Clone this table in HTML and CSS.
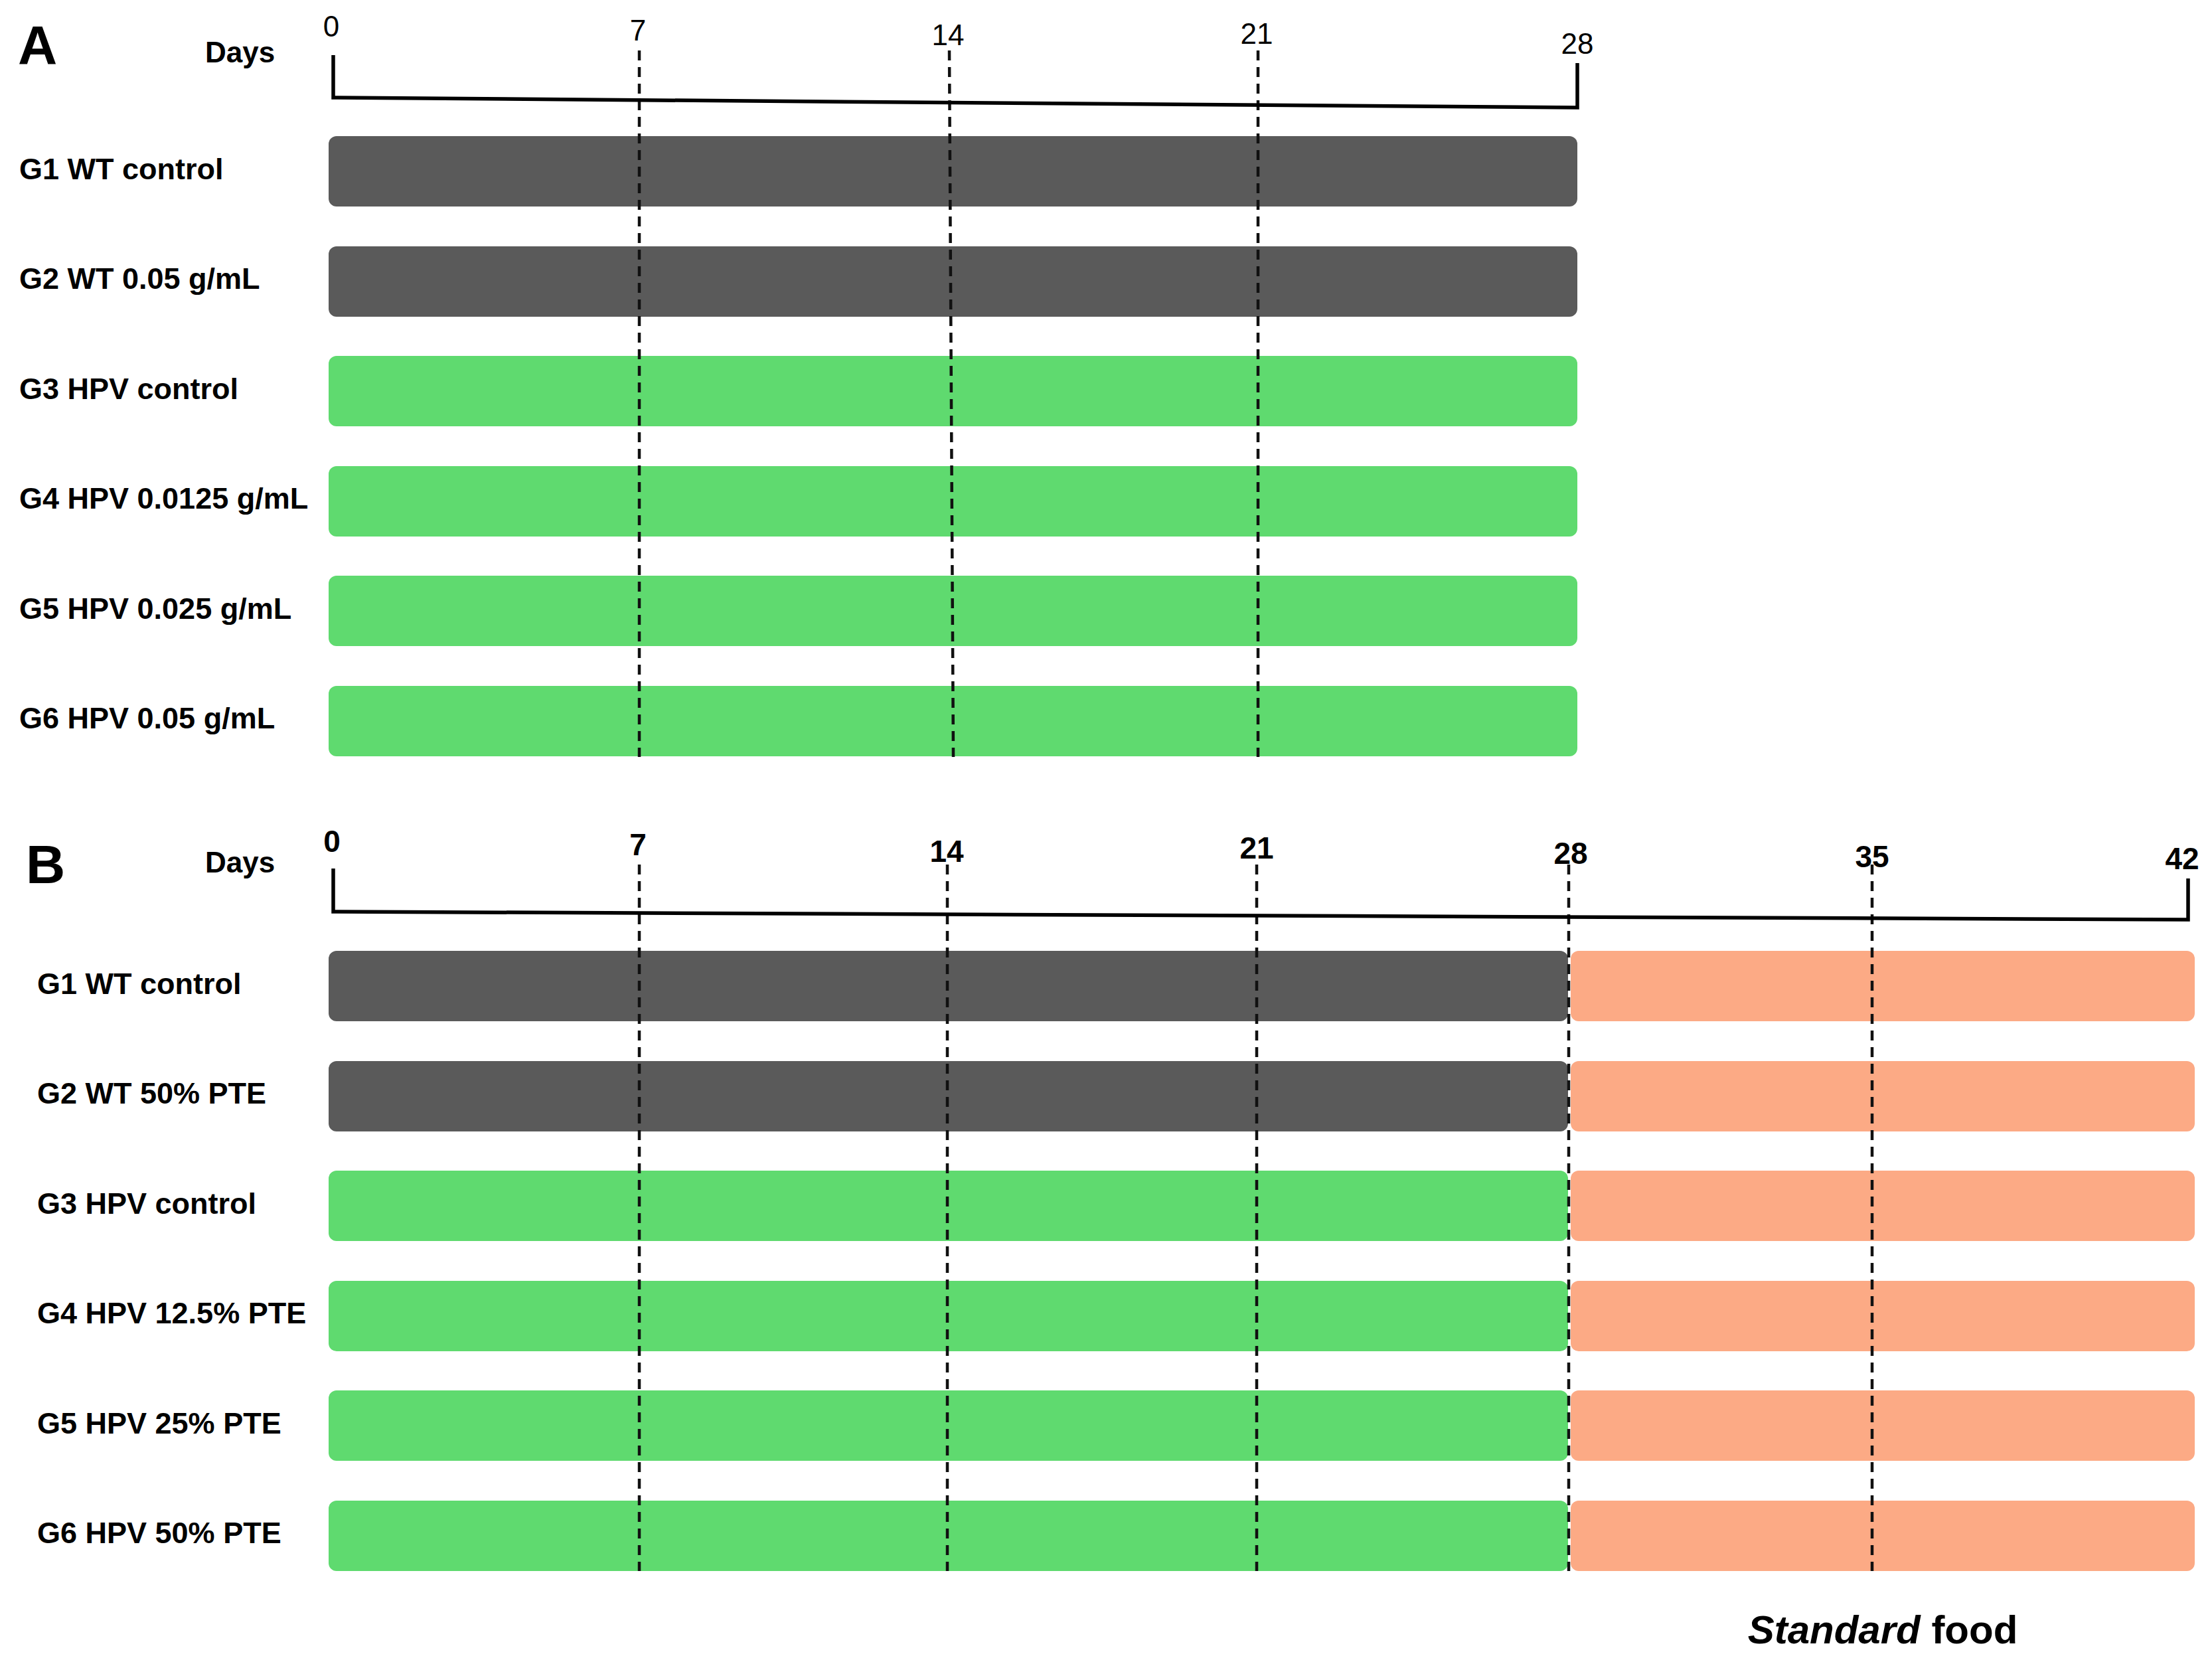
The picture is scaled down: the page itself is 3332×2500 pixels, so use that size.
FILE: index.html
```html
<!DOCTYPE html>
<html lang="en">
<head>
<meta charset="utf-8">
<title>Treatment timeline</title>
<link rel="stylesheet" href="styles.css">
</head>
<body>
<div class="figure">
  <section class="panel panel-a">
    <div class="head"><span class="letter">A</span><span class="days">Days</span></div>
    <div class="rows">
      <div class="row"><span class="label">G1 WT control</span><div class="track"><div class="bar wt full"></div></div></div>
      <div class="row"><span class="label">G2 WT 0.05 g/mL</span><div class="track"><div class="bar wt full"></div></div></div>
      <div class="row"><span class="label">G3 HPV control</span><div class="track"><div class="bar hpv full"></div></div></div>
      <div class="row"><span class="label">G4 HPV 0.0125 g/mL</span><div class="track"><div class="bar hpv full"></div></div></div>
      <div class="row"><span class="label">G5 HPV 0.025 g/mL</span><div class="track"><div class="bar hpv full"></div></div></div>
      <div class="row"><span class="label">G6 HPV 0.05 g/mL</span><div class="track"><div class="bar hpv full"></div></div></div>
    </div>
    <svg class="overlay" width="3332" height="1139" viewBox="0 0 3332 1139">
      <line class="guide" x1="963" y1="76" x2="963" y2="1140"/>
      <line class="guide" x1="1430" y1="76" x2="1436" y2="1140"/>
      <line class="guide" x1="1895" y1="76" x2="1895" y2="1140"/>
      <path class="axis" d="M502,83 L502,147 L2376,162 L2376,95"/>
      <text class="tick tick-a" x="499" y="55">0</text>
      <text class="tick tick-a" x="961" y="61">7</text>
      <text class="tick tick-a" x="1428" y="68">14</text>
      <text class="tick tick-a" x="1893" y="66">21</text>
      <text class="tick tick-a" x="2376" y="81">28</text>
    </svg>
  </section>

  <section class="panel panel-b">
    <div class="head"><span class="letter">B</span><span class="days">Days</span></div>
    <div class="rows">
      <div class="row"><span class="label">G1 WT control</span><div class="track"><div class="bar wt pre"></div><div class="bar std post"></div></div></div>
      <div class="row"><span class="label">G2 WT 50% PTE</span><div class="track"><div class="bar wt pre"></div><div class="bar std post"></div></div></div>
      <div class="row"><span class="label">G3 HPV control</span><div class="track"><div class="bar hpv pre"></div><div class="bar std post"></div></div></div>
      <div class="row"><span class="label">G4 HPV 12.5% PTE</span><div class="track"><div class="bar hpv pre"></div><div class="bar std post"></div></div></div>
      <div class="row"><span class="label">G5 HPV 25% PTE</span><div class="track"><div class="bar hpv pre"></div><div class="bar std post"></div></div></div>
      <div class="row"><span class="label">G6 HPV 50% PTE</span><div class="track"><div class="bar hpv pre"></div><div class="bar std post"></div></div></div>
    </div>
    <svg class="overlay" width="3332" height="1126" viewBox="0 0 3332 1126">
      <line class="guide" x1="963" y1="62" x2="963" y2="1126"/>
      <line class="guide" x1="1427" y1="62" x2="1427" y2="1126"/>
      <line class="guide" x1="1893" y1="62" x2="1893" y2="1126"/>
      <line class="guide" x1="2363" y1="62" x2="2363" y2="1126"/>
      <line class="guide" x1="2820" y1="62" x2="2820" y2="1126"/>
      <path class="axis" d="M502,68 L502,133 L3296,145 L3296,83"/>
      <text class="tick tick-b" x="500" y="43">0</text>
      <text class="tick tick-b" x="961" y="48">7</text>
      <text class="tick tick-b" x="1426" y="58">14</text>
      <text class="tick tick-b" x="1893" y="53">21</text>
      <text class="tick tick-b" x="2366" y="61">28</text>
      <text class="tick tick-b" x="2820" y="66">35</text>
      <text class="tick tick-b" x="3287" y="69">42</text>
    </svg>
  </section>

  <div class="foot"><p class="note"><em>Standard</em> food</p></div>
</div>
</body>
</html>
```

FILE: styles.css
```css
html, body {
  margin: 0;
  padding: 0;
  background: #ffffff;
}

body {
  font-family: "Liberation Sans", Arial, sans-serif;
  color: #000000;
}

.figure {
  width: 3332px;
  height: 2500px;
  overflow: hidden;
}

.panel {
  position: relative;
  width: 3332px;
}

.panel-b {
  margin-top: 101.5px;
}

/* header: panel letter + "Days" */
.head {
  display: flex;
  align-items: flex-start;
}

.panel-a .head {
  height: 205px;
}

.panel-b .head {
  height: 192px;
}

.letter {
  flex: 0 0 309px;
  box-sizing: border-box;
  font-weight: 700;
  font-size: 82px;
  line-height: 1;
}

.panel-a .letter {
  padding-left: 27px;
  margin-top: 27px;
}

.panel-b .letter {
  padding-left: 39px;
  margin-top: 21px;
}

.days {
  font-weight: 700;
  font-size: 44px;
  line-height: 1;
}

.panel-a .days {
  margin-top: 57px;
}

.panel-b .days {
  margin-top: 37px;
}

/* rows */
.rows {
  display: flex;
  flex-direction: column;
  gap: 59.5px;
}

.row {
  display: grid;
  grid-template-columns: 495px auto;
  align-items: center;
  height: 106px;
}

.label {
  font-weight: 700;
  font-size: 45px;
  line-height: 1;
  white-space: nowrap;
  margin-bottom: 8px;
}

.panel-a .label {
  padding-left: 29px;
}

.panel-b .label {
  padding-left: 56px;
}

.track {
  display: flex;
  height: 106px;
}

.bar {
  height: 100%;
  border-radius: 12px;
}

.bar.wt {
  background: #5a5a5a;
}

.bar.hpv {
  background: #5fda6f;
}

.bar.std {
  background: #fcaa85;
}

.bar.full {
  width: 1881px;
}

.bar.pre {
  width: 1867px;
}

.bar.post {
  width: 940px;
  margin-left: 4px;
}

/* axis, guides and tick labels drawn over the rows */
.overlay {
  position: absolute;
  top: 0;
  left: 0;
  overflow: visible;
  pointer-events: none;
}

.axis {
  fill: none;
  stroke: #000000;
  stroke-width: 5.5px;
  stroke-linejoin: miter;
}

.guide {
  stroke: #111111;
  stroke-width: 4.5px;
  stroke-dasharray: 15 10;
}

.tick {
  font-family: "Liberation Sans", Arial, sans-serif;
  text-anchor: middle;
  fill: #000000;
}

.tick-a {
  font-size: 44px;
  font-weight: 400;
}

.tick-b {
  font-size: 46px;
  font-weight: 700;
}

/* footnote */
.foot {
  display: grid;
  grid-template-columns: 2366px 940px;
  margin-top: 59.5px;
}

.note {
  grid-column: 2;
  justify-self: center;
  margin: 0;
  font-weight: 700;
  font-size: 60px;
  line-height: 1;
}

.note em {
  font-style: italic;
}
```
